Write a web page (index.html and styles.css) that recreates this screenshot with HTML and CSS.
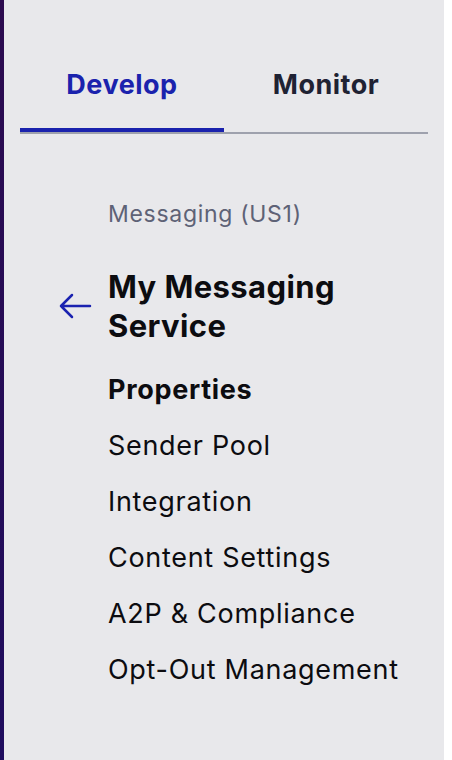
FILE: index.html
```html
<!DOCTYPE html>
<html lang="en">
<head>
<meta charset="utf-8">
<title>Sidebar</title>
<link rel="stylesheet" href="styles.css">
</head>
<body>
<div class="app">
  <div class="strip"></div>
  <aside class="panel">
    <nav class="tabs">
      <div class="tab tab-active">Develop</div>
      <div class="tab">Monitor</div>
    </nav>
    <div class="nav">
      <div class="product">Messaging (US1)</div>
      <div class="title-row">
        <svg class="back" width="34" height="26" viewBox="0 0 34 26" aria-hidden="true">
          <path d="M32 13H3M14 2L3 13l11 11" fill="none" stroke="#1a22b0" stroke-width="2.5" stroke-linecap="round" stroke-linejoin="round"/>
        </svg>
        <h1 class="title">My Messaging Service</h1>
      </div>
      <ul class="menu">
        <li class="item item-active">Properties</li>
        <li class="item">Sender Pool</li>
        <li class="item">Integration</li>
        <li class="item">Content Settings</li>
        <li class="item">A2P &amp; Compliance</li>
        <li class="item">Opt-Out Management</li>
      </ul>
    </div>
  </aside>
</div>
</body>
</html>
```
FILE: styles.css
```css
html, body {
  margin: 0;
  padding: 0;
  background: #ffffff;
}
body {
  font-family: Inter, "Noto Sans", sans-serif;
}
.app {
  display: flex;
  height: 760px;
}
.strip {
  width: 4px;
  background: linear-gradient(#2c0b4f, #1f0c5e);
}
.panel {
  width: 440px;
  background: #e8e8eb;
  box-sizing: border-box;
  padding: 45px 16px 0;
}
.tabs {
  display: flex;
  border-bottom: 2px solid #9ea1ad;
}
.tab {
  flex: 1;
  text-align: center;
  font-size: 27px;
  line-height: 32px;
  letter-spacing: 0.5px;
  font-weight: 700;
  color: #1f2233;
  padding: 24px 0 27px;
  border-bottom: 4px solid transparent;
}
.tab-active {
  color: #1a22ad;
  border-bottom-color: #1a22ad;
}
.nav {
  padding: 66px 0 0 88px;
}
.product {
  font-size: 23px;
  line-height: 28px;
  letter-spacing: 0.7px;
  color: #5e6276;
}
.title-row {
  position: relative;
  margin-top: 39px;
}
.back {
  position: absolute;
  left: -50px;
  top: 50%;
  margin-top: -13px;
}
.title {
  margin: 0;
  font-size: 31px;
  line-height: 39px;
  letter-spacing: 0.4px;
  font-weight: 700;
  color: #0c0c10;
}
.menu {
  list-style: none;
  margin: 30px 0 0;
  padding: 0;
}
.item {
  font-size: 27px;
  line-height: 30px;
  letter-spacing: 0.7px;
  color: #0c0c10;
  margin-bottom: 26px;
}
.item-active {
  font-weight: 700;
}
```
